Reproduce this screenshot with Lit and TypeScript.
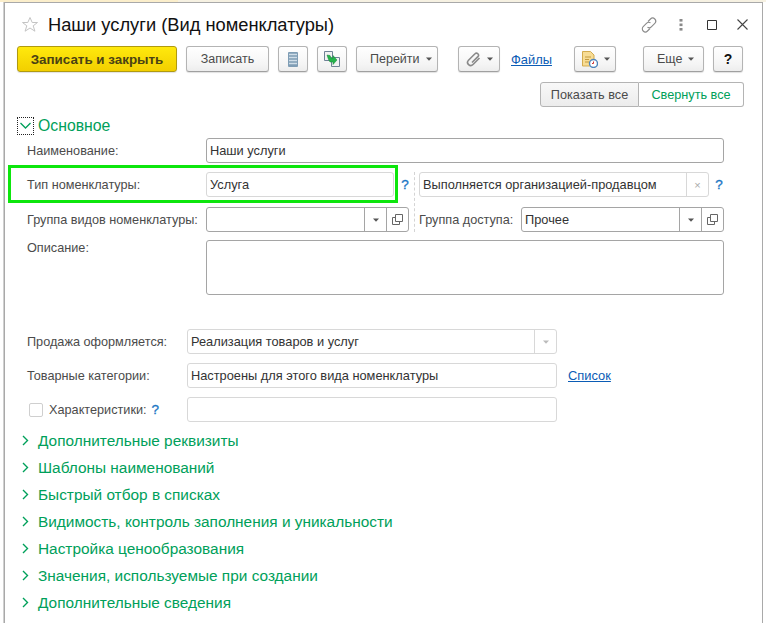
import { LitElement, html, css, svg } from "lit";
import { customElement } from "lit/decorators.js";

const drop = html`<svg class="drop" width="6" height="4" viewBox="0 0 6 4"><path d="M0 .5h6L3 3.800z" fill="#555"/></svg>`;
const openIcon = html`<svg width="11" height="11" viewBox="0 0 11 11" fill="none" stroke="#666"><path d="M3.500 .5h7v7h-7z"/><path d="M3.500 3.500H.5v7h7V7.500"/></svg>`;
const chevron = svg`<path d="M2 1l4.500 4.500L2 10" fill="none" stroke="#00a05a" stroke-width="1.400"/>`;

@customElement("app-root")
export class AppRoot extends LitElement {
  static styles = css`
    :host { display: block; width: 766px; height: 623px; overflow: hidden; background: #fff;
      font-family: "Liberation Sans", Arial, sans-serif; font-size: 12.700px; color: #4b4b4b; }
    .strip { height: 2px; background: linear-gradient(90deg, #fbeecb 0 178px, #f6f1e2 178px 100%); }
    .win { position: relative; box-sizing: border-box; margin-left: 4px; width: 759px; height: 621px;
      border: 1px solid #a9a9a9; border-width: 1px 1px 0 1px; background: #fff; box-shadow: -1px 0 0 #d0d0d0; }
    .title { display: flex; align-items: center; height: 43px; padding-left: 16px; }
    .title h1 { margin: 0 0 0 9px; font-size: 18.300px; font-weight: 400; color: #111; flex: 1; white-space: nowrap; }
    .wctl { display: flex; align-items: center; padding-right: 14px; }
    .wctl .dots { margin-left: 22px; }
    .wctl .sq { margin-left: 24px; }
    .wctl .cl { margin-left: 20px; }
    .toolbar { display: flex; height: 26px; padding-left: 12px; align-items: stretch; }
    .btn { box-sizing: border-box; display: flex; align-items: center; justify-content: center; gap: 6px; height: 26px;
      border: 1px solid #b4b4b4; border-bottom-color: #a0a0a0; border-radius: 3px; background: linear-gradient(#fff, #f5f5f5 70%, #ededed);
      box-shadow: 0 1px 1px rgba(0,0,0,.12); color: #4b4b4b; white-space: nowrap; font-size: 12.500px; }
    .primary { width: 160px; font-weight: 700; font-size: 13.400px; color: #4a4214; border-color: #b09a10; background: linear-gradient(#ffe90d, #f2cf00); }
    .w83 { width: 83px; margin-left: 9px; }
    .w30 { width: 30px; margin-left: 9px; }
    .w82 { width: 82px; margin-left: 9px; justify-content: flex-start; padding-left: 13px; }
    .w42a { width: 42px; margin-left: 20px; justify-content: flex-start; padding-left: 7px; }
    .files { margin-left: 11px; align-self: center; color: #0b5cb5; text-decoration: underline; width: 41px; font-size: 12.900px; }
    .w42b { width: 42px; margin-left: 22px; justify-content: flex-start; padding-left: 7px; }
    .w61 { width: 61px; margin-left: 27px; justify-content: flex-start; padding-left: 13px; }
    .help { width: 30px; margin-left: 9px; color: #111; font-weight: 700; font-size: 14px; }
    .seg { display: flex; justify-content: flex-end; padding: 10px 18px 0 0; }
    .seg div { box-sizing: border-box; height: 25px; display: flex; align-items: center; justify-content: center; border: 1px solid #b4b4b4; }
    .seg .a { width: 99px; border-radius: 3px 0 0 3px; background: linear-gradient(#f8f8f8, #ececec); }
    .seg .b { width: 105px; border-left: 0; border-radius: 0 3px 3px 0; color: #00a05a; background: #fff; }
    .grp { display: flex; align-items: center; font-size: 15.400px; color: #00a05a; height: 27px; white-space: nowrap; }
    .grp svg { margin: 0 8px 0 16px; flex: none; }
    .main { margin-top: 8px; height: 21px; font-size: 15.800px; }
    .focus { box-sizing: border-box; display: flex; align-items: center; justify-content: center; width: 17px; height: 18px; margin: 0 4px 0 12px; border: 1px dotted #222; }
    .focus svg { margin: 0; }
    .row { display: flex; align-items: center; height: 25px; padding-left: 22px; }
    .label { white-space: nowrap; }
    .l179 { width: 179px; flex: none; }
    .l160 { width: 160px; flex: none; }
    .f { box-sizing: border-box; display: flex; align-items: stretch; height: 25px; border: 1px solid #a5a5a5; border-radius: 3px; background: #fff; color: #333; font-size: 12.800px; }
    .f.light { border-color: #d8d8d8; }
    .f span.t { flex: 1; padding-left: 3px; line-height: 23px; white-space: nowrap; overflow: hidden; }
    .f .cell { width: 21px; flex: none; display: flex; align-items: center; justify-content: center; border-left: 1px solid #a5a5a5; }
    .f.light .cell { border-left-color: #d8d8d8; }
    .f .x { color: #aaa; font-size: 11px; }
    .full { width: 518px; }
    .r1 { margin-top: 2px; }
    .t188 { width: 188px; }
    .q { color: #1a76c4; font-weight: 400; font-size: 13.500px; text-align: center; -webkit-text-stroke: .3px #1a76c4; }
    .q1 { width: 22px; flex: none; }
    .dash { width: 0; height: 60px; border-left: 1px dashed #d4d4d4; align-self: flex-start; flex: none; margin-left: -2px; }
    .t290 { width: 290px; }
    .q2 { width: 20px; }
    .double { display: flex; align-items: flex-start; padding-left: 22px; margin-top: 9px; height: 60px; }
    .col { display: flex; flex-direction: column; gap: 10px; }
    .line { display: flex; align-items: center; height: 25px; }
    .t203 { width: 203px; }
    .lab2 { width: 102px; flex: none; }
    .line.r { margin-left: 4px; }
    .desc { display: flex; padding-left: 22px; margin-top: 8px; }
    .desc .label { padding-top: 1px; }
    .area { box-sizing: border-box; width: 518px; height: 55px; border: 1px solid #a5a5a5; border-radius: 3px; }
    .s1 { margin-top: 34px; }
    .s2 { margin-top: 9px; }
    .t370 { width: 370px; }
    .link { margin-left: 11px; color: #0b5cb5; text-decoration: underline; font-size: 12.900px; }
    .cb { box-sizing: border-box; width: 14px; height: 14px; margin: 0 6px 0 2px; border: 1px solid #cfcfcf; border-radius: 2px; flex: none; }
    .chlab { display: flex; align-items: center; }
    .chlab .q { margin-left: 5px; }
    .groups { margin-top: 5px; }
    .outline { position: absolute; left: 3px; top: 162px; width: 390px; height: 38px; box-sizing: border-box; border: 3px solid #0de60d; pointer-events: none; }
  `;

  render() {
    const groups = ["Дополнительные реквизиты", "Шаблоны наименований", "Быстрый отбор в списках",
      "Видимость, контроль заполнения и уникальности", "Настройка ценообразования",
      "Значения, используемые при создании", "Дополнительные сведения"];
    return html`
      <div class="strip"></div>
      <div class="win">
        <div class="title">
          <svg width="18" height="17" viewBox="0 0 18 17"><path d="M9 1.500l2.200 5h5.300l-4.300 3.300 1.700 5.400L9 12l-4.900 3.200 1.700-5.400L1.500 6.500h5.300z" fill="#fff" stroke="#c4c4c4"/></svg>
          <h1>Наши услуги (Вид номенклатуры)</h1>
          <div class="wctl">
            <svg width="16" height="16" viewBox="0 0 16 16" fill="none" stroke="#8a8a8a" stroke-width="1.100"><path d="M7 4.500l2.500-2.500a3 3 0 0 1 4.300 4.300l-3.500 3.500a3 3 0 0 1-3.800.4"/><path d="M9 11.500l-2.500 2.500a3 3 0 0 1-4.300-4.300l3.500-3.500a3 3 0 0 1 3.800-.4"/></svg>
            <svg class="dots" width="4" height="12" viewBox="0 0 4 12" fill="#8a8a8a"><rect x=".5" y="0" width="3" height="2.600"/><rect x=".5" y="4.500" width="3" height="2.600"/><rect x=".5" y="9" width="3" height="2.600"/></svg>
            <svg class="sq" width="10" height="10" viewBox="0 0 10 10" fill="none" stroke="#333"><path d="M.5.500h9v9h-9z"/></svg>
            <svg class="cl" width="11" height="11" viewBox="0 0 11 11" fill="none" stroke="#444" stroke-width="1.100"><path d="M.5.500l10 10M10.500.5l-10 10"/></svg>
          </div>
        </div>
        <div class="toolbar">
          <div class="btn primary">Записать и закрыть</div>
          <div class="btn w83">Записать</div>
          <div class="btn w30"><svg width="10" height="15" viewBox="0 0 10 15"><rect width="10" height="15" rx="1" fill="#7f9db5"/><path d="M1 2.500h8M1 5.500h8M1 8.500h8M1 11.500h8" stroke="#cfdde8" stroke-width="1.500"/></svg></div>
          <div class="btn w30"><svg width="16" height="16" viewBox="0 0 16 16"><path d="M.5.500h8v9h-8z" fill="#f2f2f2" stroke="#6f8296"/><path d="M7.500 6.500h8v9h-8z" fill="#f2f2f2" stroke="#6f8296"/><path d="M3 4l3 .5 1.200 2.500H9V4.500l4 4.500-4 4.500V11H6L4.500 8.500z" fill="#25b34b" stroke="#14863a" stroke-width=".5"/></svg></div>
          <div class="btn w82">Перейти ${drop}</div>
          <div class="btn w42a"><svg width="15" height="15" viewBox="0 0 15 15" fill="none" stroke="#8a8a8a" stroke-width="1.600"><path d="M13.500 6L7 12.500a3 3 0 0 1-4.500-4.300L9 1.800a2 2 0 0 1 2.900 2.800L6 10.500"/></svg>${drop}</div>
          <a class="files">Файлы</a>
          <div class="btn w42b"><svg width="16" height="17" viewBox="0 0 16 17"><path d="M.5.500h8l3.500 3.500v11H.5z" fill="#f7dc94" stroke="#d3ab4e"/><path d="M3 6h6M3 8.500h4M3 11h4" stroke="#c39a3f"/><circle cx="11.500" cy="12.500" r="4" fill="#fff" stroke="#4f86bd" stroke-width="1.400"/><path d="M11.500 10.500v2h-1.500" stroke="#c33" fill="none"/></svg>${drop}</div>
          <div class="btn w61">Еще ${drop}</div>
          <div class="btn help">?</div>
        </div>
        <div class="seg"><div class="a">Показать все</div><div class="b">Свернуть все</div></div>
        <div class="grp main">
          <span class="focus"><svg width="11" height="7" viewBox="0 0 11 7"><path d="M.5 1l5 5 5-5" fill="none" stroke="#00a05a" stroke-width="1.300"/></svg></span>Основное
        </div>
        <div class="row r1">
          <span class="label l179">Наименование:</span>
          <div class="f full"><span class="t">Наши услуги</span></div>
        </div>
        <div class="double">
          <div class="col">
            <div class="line"><span class="label l179">Тип номенклатуры:</span><div class="f light t188"><span class="t">Услуга</span></div><span class="q q1">?</span></div>
            <div class="line"><span class="label l179">Группа видов номенклатуры:</span><div class="f t203"><span class="t"></span><span class="cell">${drop}</span><span class="cell">${openIcon}</span></div></div>
          </div>
          <div class="dash"></div>
          <div class="col">
            <div class="line r"><div class="f light t290"><span class="t">Выполняется организацией-продавцом</span><span class="cell x">×</span></div><span class="q q2">?</span></div>
            <div class="line r"><span class="label lab2">Группа доступа:</span><div class="f t203"><span class="t">Прочее</span><span class="cell">${drop}</span><span class="cell">${openIcon}</span></div></div>
          </div>
        </div>
        <div class="desc"><span class="label l179">Описание:</span><div class="area"></div></div>
        <div class="row s1"><span class="label l160">Продажа оформляется:</span><div class="f light t370"><span class="t">Реализация товаров и услуг</span><span class="cell"><svg width="6" height="4" viewBox="0 0 6 4"><path d="M0 .5h6L3 3.800z" fill="#bbb"/></svg></span></div></div>
        <div class="row s2"><span class="label l160">Товарные категории:</span><div class="f light t370"><span class="t">Настроены для этого вида номенклатуры</span></div><a class="link">Список</a></div>
        <div class="row s2"><span class="label l160 chlab"><span class="cb"></span>Характеристики:<span class="q">?</span></span><div class="f light t370"></div></div>
        <div class="groups">
          ${groups.map((g) => html`<div class="grp"><svg width="9" height="11" viewBox="0 0 9 11">${chevron}</svg>${g}</div>`)}
        </div>
        <div class="outline"></div>
      </div>
    `;
  }
}
